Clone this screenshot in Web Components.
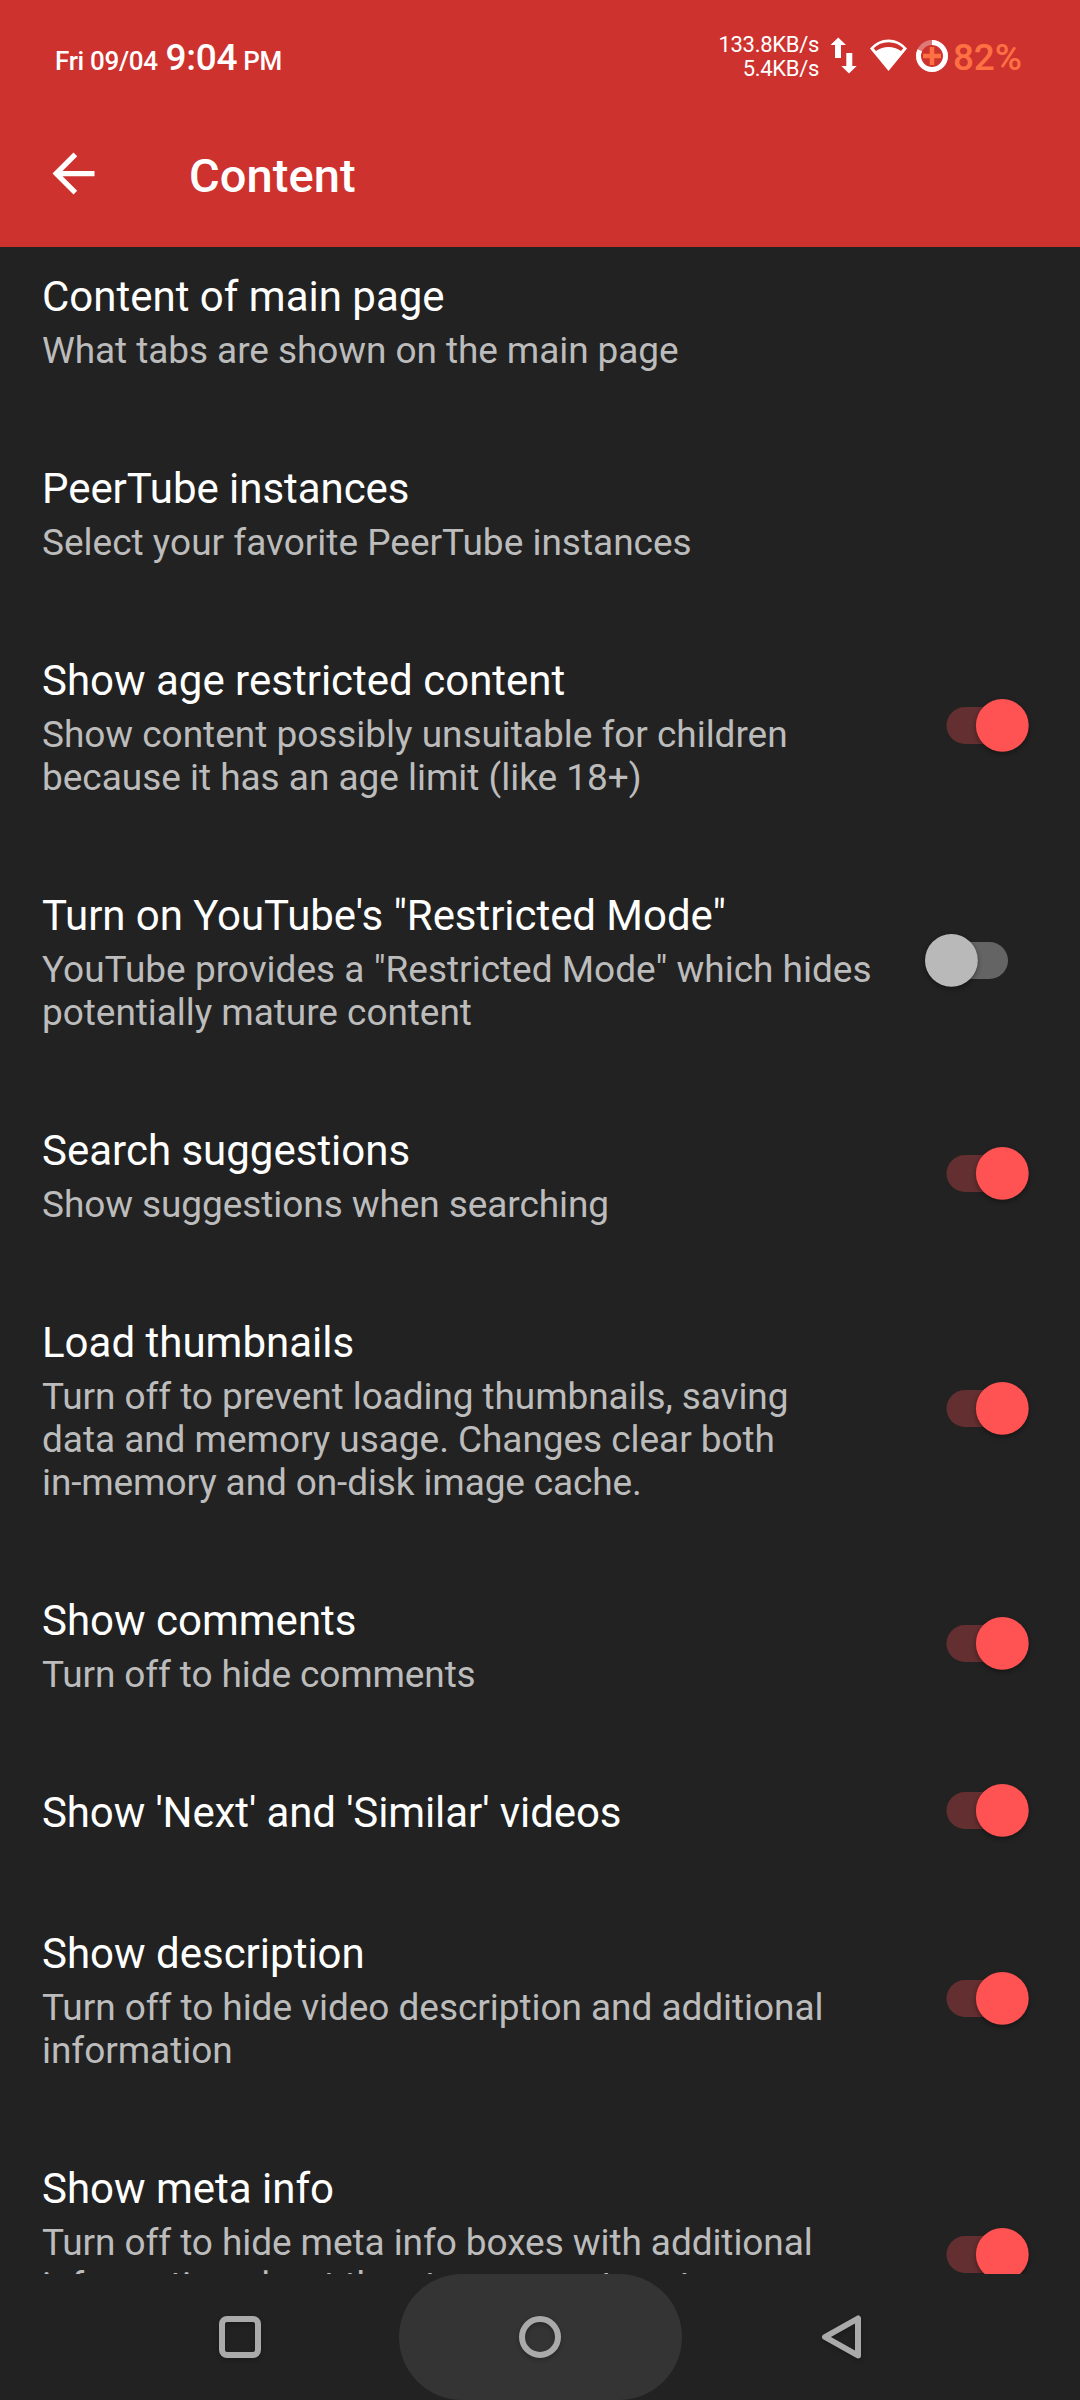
<!DOCTYPE html>
<html lang="en">
<head>
<meta charset="utf-8">
<title>Content</title>
<style>
html, body { margin: 0; background: #222; }
body { width: 1080px; height: 2400px; overflow: hidden; font-family: Roboto, sans-serif; color: #fff; }
.t3 { letter-spacing: -.03px; }
.t5 { letter-spacing: -.05px; }
.t8 { letter-spacing: -.08px; }
.t12 { letter-spacing: -.12px; }
</style>
</head>
<body>
<settings-screen>
  <status-bar slot="status"></status-bar>
  <app-bar slot="bar">Content</app-bar>
  <pref-row>Content of main page<span slot="summary" class="t8">What tabs are shown on the main page</span></pref-row>
  <pref-row><span class="t5">PeerTube instances</span><span slot="summary">Select your favorite PeerTube instances</span></pref-row>
  <pref-row>Show age restricted content<span slot="summary" class="t3">Show content possibly unsuitable for children<br>because it has an age limit (like 18+)</span><toggle-switch slot="widget" on></toggle-switch></pref-row>
  <pref-row><span class="t5">Turn on YouTube's "Restricted Mode"</span><span slot="summary">YouTube provides a "Restricted Mode" which hides<br><span class="t5">potentially mature content</span></span><toggle-switch slot="widget"></toggle-switch></pref-row>
  <pref-row>Search suggestions<span slot="summary" class="t8">Show suggestions when searching</span><toggle-switch slot="widget" on></toggle-switch></pref-row>
  <pref-row>Load thumbnails<span slot="summary" class="t8">Turn off to prevent loading thumbnails, saving<br><span class="t5">data and memory usage. Changes clear both</span><br><span class="t12">in-memory and on-disk image cache.</span></span><toggle-switch slot="widget" on></toggle-switch></pref-row>
  <pref-row>Show comments<span slot="summary" class="t12">Turn off to hide comments</span><toggle-switch slot="widget" on></toggle-switch></pref-row>
  <pref-row><span class="t12">Show 'Next' and 'Similar' videos</span><toggle-switch slot="widget" on></toggle-switch></pref-row>
  <pref-row>Show description<span slot="summary" class="t5">Turn off to hide video description and additional<br>information</span><toggle-switch slot="widget" on></toggle-switch></pref-row>
  <pref-row>Show meta info<span slot="summary" class="t8">Turn off to hide meta info boxes with additional<br>information about the stream creator, stream<br>content or a search request.</span><toggle-switch slot="widget" on></toggle-switch></pref-row>
  <nav-bar slot="nav"></nav-bar>
</settings-screen>
<script>
function define(name, html, setup) {
  customElements.define(name, class extends HTMLElement {
    constructor() {
      super();
      this.attachShadow({ mode: 'open' }).innerHTML = html;
      if (setup) setup(this);
    }
  });
}

define('settings-screen', `
<style>
:host { display: flex; flex-direction: column; width: 1080px; height: 2400px; background: #222; }
header { flex: none; height: 247px; background: #cd322e; display: flex; flex-direction: column; }
main { flex: 1; min-height: 0; overflow: hidden; display: flex; flex-direction: column; }
.scroll { margin-top: -24px; display: flex; flex-direction: column; flex: none; }
</style>
<header><slot name="status"></slot><slot name="bar"></slot></header>
<main><div class="scroll"><slot></slot></div></main>
<slot name="nav"></slot>`);

define('status-bar', `
<style>
:host { display: flex; justify-content: space-between; height: 100px; padding: 0 58px 0 55px; white-space: pre; box-sizing: border-box; }
.clock { font-weight: 500; font-size: 26px; line-height: 44px; padding-top: 36px; letter-spacing: -.3px; }
.clock b { font-weight: 500; font-size: 37px; margin-left: 1.500px; }
.right { display: flex; }
.net { font-size: 22px; line-height: 24px; text-align: right; padding-top: 33px; letter-spacing: -.3px; }
svg { display: block; flex: none; }
.pct { width: 69px; font-size: 37px; line-height: 44px; font-weight: 500; color: #ff7043; padding-top: 36px; letter-spacing: -.2px; }
</style>
<div class="clock">Fri 09/04 <b>9:04</b> PM</div>
<div class="right">
<div class="net">133.8KB/s
5.4KB/s</div>
<svg width="134" height="100" viewBox="819 0 134 100">
<path fill="#fff" d="M838.300 37.500l7.700 7.500h-5v13h-6V45h-4.500zM849 73.500l-7.700-7.500h5V53h6v13h4.400z"/>
<path fill="#fff" fill-rule="evenodd" d="M888.500 71L870 48.500C880.500 36.500 896.500 36.500 907 48.500zM888.500 42.200C882.500 42.200 877.500 44.500 873.700 48.200L876 51C883.500 45.500 893.500 45.500 901 51L903.300 48.200C899.500 44.500 894.500 42.200 888.500 42.200z"/>
<circle cx="932" cy="56" r="13.500" fill="none" stroke="#fff" stroke-opacity=".35" stroke-width="5"/>
<circle cx="932" cy="56" r="13.500" fill="none" stroke="#fff" stroke-width="5" pathLength="100" stroke-dasharray="82 18" transform="rotate(-90 932 56)"/>
<path d="M923 56h18M932 47v18" stroke="#ff7043" stroke-width="4.500"/>
</svg>
<div class="pct">82%</div>
</div>`);

define('app-bar', `
<style>
:host { display: flex; height: 147px; align-items: center; padding-left: 42px; gap: 84px; font-weight: 500; font-size: 47px; line-height: 56px; }
svg { display: block; flex: none; }
div { margin-top: 4px; letter-spacing: .1px; }
</style>
<svg width="63" height="63" viewBox="0 0 24 24"><path fill="#fff" d="M20 11H7.830l5.590-5.590L12 4l-8 8 8 8 1.410-1.410L7.830 13H20z"/></svg>
<div><slot></slot></div>`);

define('pref-row', `
<style>
:host { display: flex; align-items: center; justify-content: space-between; box-sizing: border-box; padding-left: 42px; padding-right: 42px; flex: none; }
.text { padding: 49px 0 43px; white-space: nowrap; }
.title { font-size: 42px; line-height: 49px; }
.summary { margin-top: 8px; font-size: 37px; line-height: 43px; color: #bcbcbc; }
.summary[hidden] { display: none; }
</style>
<div class="text"><div class="title"><slot></slot></div><div class="summary"><slot name="summary"></slot></div></div>
<slot name="widget"></slot>`, host => {
  const slot = host.shadowRoot.querySelector('slot[name=summary]');
  const update = () => { slot.parentNode.hidden = !host.querySelector('[slot=summary]'); };
  slot.addEventListener('slotchange', update);
  update();
});

define('toggle-switch', `
<style>
:host { display: block; width: 124px; height: 72px; flex: none; }
svg { display: block; overflow: visible; }
.off { display: block; } .on { display: none; }
:host([on]) .off { display: none; } :host([on]) .on { display: block; }
circle { filter: drop-shadow(0 2px 2.500px rgba(0,0,0,.4)); }
</style>
<svg width="124" height="72" viewBox="914 689 124 72">
<g class="on"><rect x="946.500" y="707" width="61" height="37" rx="18.500" fill="#642f30"/><circle cx="1002.300" cy="725.400" r="26.400" fill="#ff5252"/></g>
<g class="off"><rect x="946.500" y="707" width="61.500" height="37" rx="18.500" fill="#646464"/><circle cx="951.400" cy="725.400" r="26.400" fill="#b9b9b9"/></g>
</svg>`);

define('nav-bar', `
<style>
:host { display: flex; flex: none; height: 126px; justify-content: center; align-items: center; background: #222; gap: 17px; }
div { width: 283px; height: 126px; border-radius: 63px; display: flex; align-items: center; justify-content: center; }
.home { background: #343434; }
svg { display: block; fill: none; stroke: #aaa; stroke-width: 6; filter: drop-shadow(0 2px 2px rgba(0,0,0,.25)); }
</style>
<div><svg width="50" height="50" viewBox="-25 -25 50 50"><rect x="-18" y="-18" width="36" height="36" rx="5"/></svg></div>
<div class="home"><svg width="50" height="50" viewBox="-25 -25 50 50"><circle r="18"/></svg></div>
<div><svg width="50" height="50" viewBox="-25 -25 50 50"><path stroke-linejoin="round" d="M-15 0L18-18.500V18.500z"/></svg></div>`);
</script>
</body>
</html>
